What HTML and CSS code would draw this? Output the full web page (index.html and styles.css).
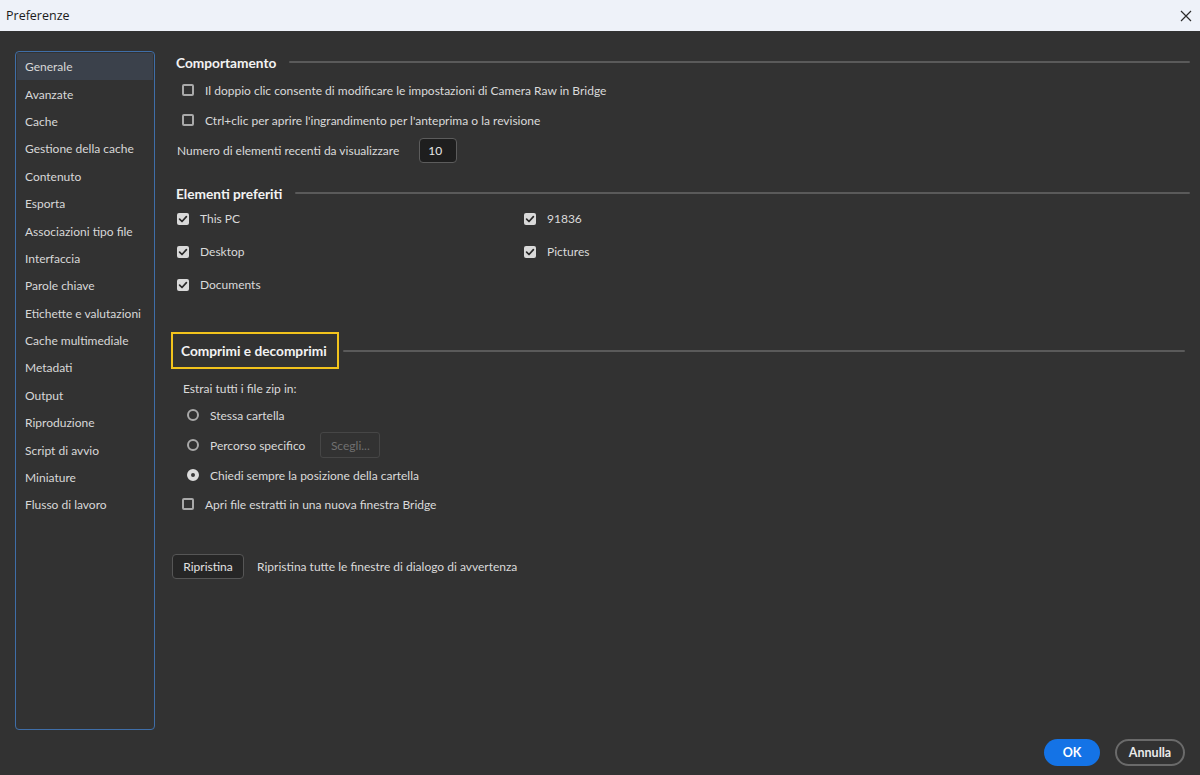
FILE: index.html
```html
<!DOCTYPE html>
<html lang="it">
<head>
<meta charset="utf-8">
<title>Preferenze</title>
<link rel="stylesheet" href="styles.css">
</head>
<body>
<div class="window">
  <div class="titlebar">
    <span class="title">Preferenze</span>
    <span class="close"><svg width="12" height="12" viewBox="0 0 12 12"><path d="M1 1 L11 11 M11 1 L1 11" stroke="#2b2b2b" stroke-width="1.2" fill="none"/></svg></span>
  </div>
  <div class="body">
    <div class="main">
      <nav class="sidebar">
        <div class="nav-item active">Generale</div>
        <div class="nav-item">Avanzate</div>
        <div class="nav-item">Cache</div>
        <div class="nav-item">Gestione della cache</div>
        <div class="nav-item">Contenuto</div>
        <div class="nav-item">Esporta</div>
        <div class="nav-item">Associazioni tipo file</div>
        <div class="nav-item">Interfaccia</div>
        <div class="nav-item">Parole chiave</div>
        <div class="nav-item">Etichette e valutazioni</div>
        <div class="nav-item">Cache multimediale</div>
        <div class="nav-item">Metadati</div>
        <div class="nav-item">Output</div>
        <div class="nav-item">Riproduzione</div>
        <div class="nav-item">Script di avvio</div>
        <div class="nav-item">Miniature</div>
        <div class="nav-item">Flusso di lavoro</div>
      </nav>
      <section class="content">
        <div class="heading h1"><span class="heading-text">Comportamento</span><span class="rule"></span></div>
        <div class="row cb-row first"><span class="cb"></span><span>Il doppio clic consente di modificare le impostazioni di Camera Raw in Bridge</span></div>
        <div class="row cb-row"><span class="cb"></span><span>Ctrl+clic per aprire l'ingrandimento per l'anteprima o la revisione</span></div>
        <div class="row num-row"><span>Numero di elementi recenti da visualizzare</span><span class="num-input">10</span></div>

        <div class="heading h2"><span class="heading-text">Elementi preferiti</span><span class="rule"></span></div>
        <div class="fav-grid">
          <div class="fav"><span class="cb checked"><svg width="12" height="12" viewBox="0 0 12 12"><path d="M2.6 6.2 L5 8.5 L9.4 3.6" stroke="#2a2a2a" stroke-width="1.7" fill="none" stroke-linecap="round" stroke-linejoin="round"/></svg></span><span>This PC</span></div>
          <div class="fav"><span class="cb checked"><svg width="12" height="12" viewBox="0 0 12 12"><path d="M2.6 6.2 L5 8.5 L9.4 3.6" stroke="#2a2a2a" stroke-width="1.7" fill="none" stroke-linecap="round" stroke-linejoin="round"/></svg></span><span>91836</span></div>
          <div class="fav"><span class="cb checked"><svg width="12" height="12" viewBox="0 0 12 12"><path d="M2.6 6.2 L5 8.5 L9.4 3.6" stroke="#2a2a2a" stroke-width="1.7" fill="none" stroke-linecap="round" stroke-linejoin="round"/></svg></span><span>Desktop</span></div>
          <div class="fav"><span class="cb checked"><svg width="12" height="12" viewBox="0 0 12 12"><path d="M2.6 6.2 L5 8.5 L9.4 3.6" stroke="#2a2a2a" stroke-width="1.7" fill="none" stroke-linecap="round" stroke-linejoin="round"/></svg></span><span>Pictures</span></div>
          <div class="fav"><span class="cb checked"><svg width="12" height="12" viewBox="0 0 12 12"><path d="M2.6 6.2 L5 8.5 L9.4 3.6" stroke="#2a2a2a" stroke-width="1.7" fill="none" stroke-linecap="round" stroke-linejoin="round"/></svg></span><span>Documents</span></div>
        </div>

        <div class="heading h3"><span class="heading-box">Comprimi e decomprimi</span><span class="rule"></span></div>
        <div class="row estrai">Estrai tutti i file zip in:</div>
        <div class="row radio-row"><span class="radio"></span><span>Stessa cartella</span></div>
        <div class="row radio-row"><span class="radio"></span><span>Percorso specifico</span><span class="btn-disabled">Scegli...</span></div>
        <div class="row radio-row"><span class="radio checked"></span><span>Chiedi sempre la posizione della cartella</span></div>
        <div class="row cb-row apri"><span class="cb"></span><span>Apri file estratti in una nuova finestra Bridge</span></div>

        <div class="row reset-row"><span class="btn">Ripristina</span><span>Ripristina tutte le finestre di dialogo di avvertenza</span></div>
      </section>
    </div>
    <div class="footer">
      <span class="pill primary">OK</span>
      <span class="pill secondary">Annulla</span>
    </div>
  </div>
</div>
</body>
</html>
```

FILE: styles.css
```css
* { box-sizing: border-box; }
html, body { margin: 0; padding: 0; }
body {
  width: 1200px;
  height: 775px;
  overflow: hidden;
  background: #323232;
  font-family: Lato, "Open Sans", sans-serif;
  font-size: 12px;
  color: #dadada;
}
.window { display: flex; flex-direction: column; height: 775px; }
.titlebar {
  height: 31px;
  background: #eef2f9;
  display: flex;
  align-items: center;
  justify-content: space-between;
  padding: 0 8px 0 6px;
  color: #1b1b1b;
  font-family: "Open Sans", sans-serif;
  font-size: 12.5px;
}
.close { display: flex; width: 12px; height: 12px; }
.body {
  flex: 1;
  display: flex;
  flex-direction: column;
  padding: 20px 15px 9px 15px;
}
.main { display: flex; height: 679px; }
.sidebar {
  width: 140px;
  height: 679px;
  border: 1px solid #3f6ea8;
  border-radius: 4px;
  padding: 1px 1px;
  flex-shrink: 0;
}
.nav-item {
  height: 27.4px;
  display: flex;
  align-items: center;
  padding-left: 8px;
  white-space: nowrap;
  color: #d8d8d8;
}
.nav-item.active { background: #3b414b; }
.content {
  flex: 1;
  display: flex;
  flex-direction: column;
  padding-left: 21px;
}
.heading { display: flex; align-items: center; }
.heading-text { font-weight: bold; color: #f2f2f2; font-size: 13.7px; }
.rule {
  flex: 1;
  height: 2px;
  background: #5a5a5a;
  border-radius: 1px;
  margin-left: 13px;
  margin-right: -5px;
}
.h1 { height: 22px; }
.h2 { height: 22px; margin-top: 17px; }
.h3 { margin-top: 31px; margin-left: -5px; }
.heading-box {
  border: 2px solid #f2c31c;
  height: 37px;
  display: flex;
  align-items: center;
  padding: 0 10px 0 8px;
  font-weight: bold;
  color: #f2f2f2;
  font-size: 13.7px;
}
.h3 .rule { margin-left: 4px; margin-right: 0; }
.row { display: flex; align-items: center; height: 30px; }
.first { margin-top: 2px; }
.cb-row { padding-left: 6px; gap: 11px; }
.cb {
  width: 12px;
  height: 12px;
  border: 2px solid #a9a9a9;
  border-radius: 2px;
  flex-shrink: 0;
  display: flex;
}
.cb.checked { background: #d9d9d9; border: none; border-radius: 2px; }
.num-row { gap: 20px; padding-left: 1px; }
.num-input {
  width: 38px;
  height: 25px;
  background: #1e1e1e;
  border: 1px solid #5c5c5c;
  border-radius: 4px;
  display: flex;
  align-items: center;
  padding-left: 8px;
  color: #e6e6e6;
}
.fav-grid {
  display: grid;
  grid-template-columns: 347px 1fr;
  grid-auto-rows: 33px;
  margin-top: -2px;
}
.fav { display: flex; align-items: center; gap: 11px; padding-left: 1px; }
.estrai { height: 24px; margin-top: 7px; padding-left: 7px; }
.radio-row { padding-left: 11px; gap: 11px; }
.radio {
  width: 12px;
  height: 12px;
  border: 2px solid #a9a9a9;
  border-radius: 50%;
  flex-shrink: 0;
}
.radio.checked {
  border: 4px solid #dcdcdc;
  background: #3a3a3a;
}
.btn-disabled {
  margin-left: 4px;
  width: 60px;
  height: 26px;
  border: 1px solid #464646;
  border-radius: 3px;
  display: flex;
  align-items: center;
  justify-content: center;
  color: #707070;
}
.apri { height: 28px; }
.reset-row { margin-top: 36px; height: 25px; gap: 13px; margin-left: -4px; }
.btn {
  width: 72px;
  height: 25px;
  background: #262626;
  border: 1px solid #565656;
  border-radius: 4px;
  display: flex;
  align-items: center;
  justify-content: center;
  color: #e2e2e2;
}
.footer {
  margin-top: 9px;
  display: flex;
  justify-content: flex-end;
  gap: 15px;
  height: 27px;
}
.pill {
  height: 27px;
  border-radius: 14px;
  display: flex;
  align-items: center;
  justify-content: center;
  font-weight: bold;
  font-size: 12.5px;
}
.primary { width: 56px; background: #1473e6; color: #ffffff; }
.secondary { width: 70px; border: 2px solid #6a6a6a; color: #eaeaea; }
```
